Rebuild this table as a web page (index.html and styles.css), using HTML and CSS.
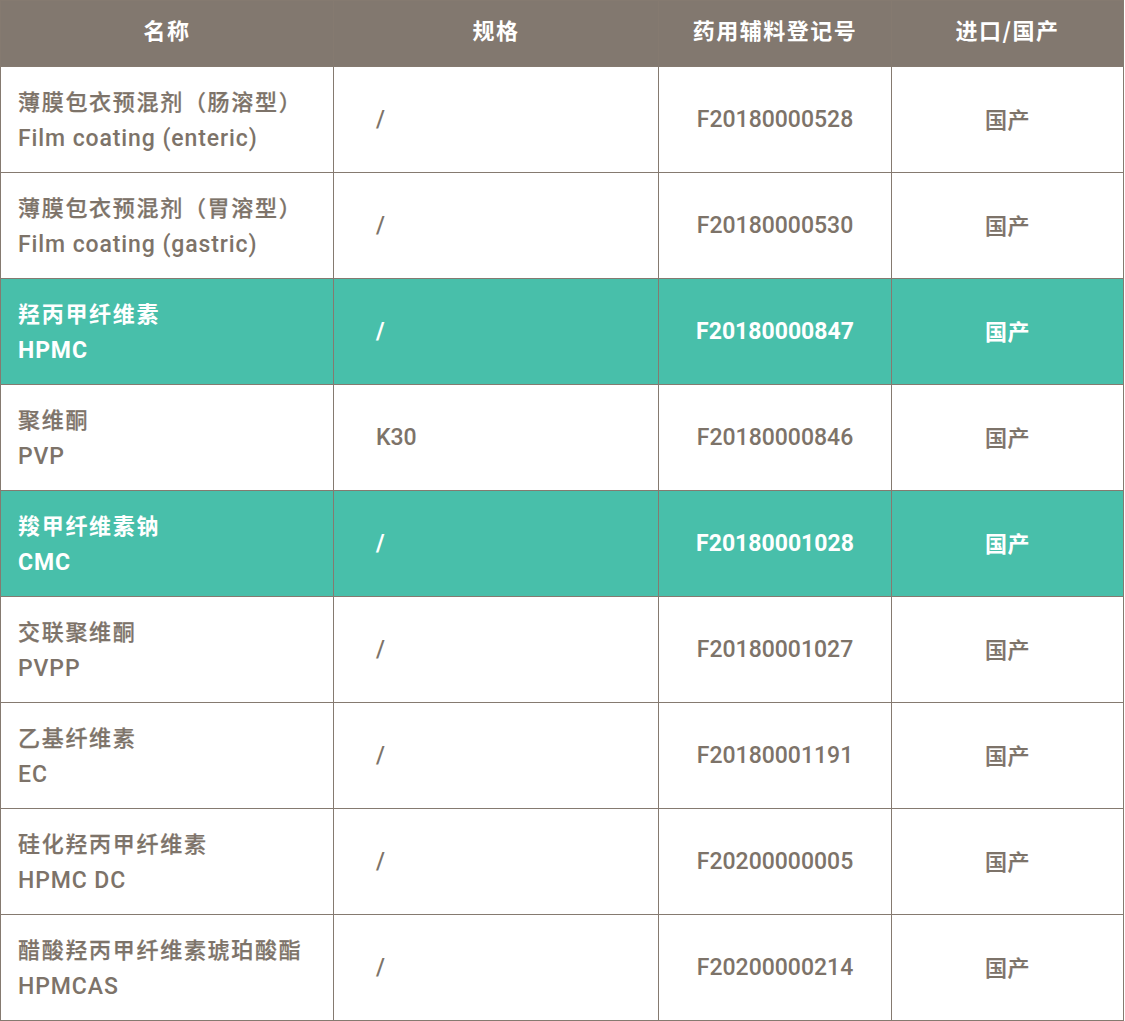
FILE: index.html
```html
<!DOCTYPE html>
<html lang="zh">
<head>
<meta charset="utf-8">
<link rel="stylesheet" href="styles.css">
</head>
<body>
<table class="spec">
  <colgroup>
    <col class="c1"><col class="c2"><col class="c3"><col class="c4">
  </colgroup>
  <thead>
    <tr><th>名称</th><th>规格</th><th>药用辅料登记号</th><th>进口/国产</th></tr>
  </thead>
  <tbody>
    <tr><td class="name"><span class="cn">薄膜包衣预混剂（肠溶型）</span><span class="en">Film coating (enteric)</span></td><td class="size">/</td><td class="num">F20180000528</td><td class="orig">国产</td></tr>
    <tr><td class="name"><span class="cn">薄膜包衣预混剂（胃溶型）</span><span class="en">Film coating (gastric)</span></td><td class="size">/</td><td class="num">F20180000530</td><td class="orig">国产</td></tr>
    <tr class="hl"><td class="name"><span class="cn">羟丙甲纤维素</span><span class="en">HPMC</span></td><td class="size">/</td><td class="num">F20180000847</td><td class="orig">国产</td></tr>
    <tr><td class="name"><span class="cn">聚维酮</span><span class="en">PVP</span></td><td class="size">K30</td><td class="num">F20180000846</td><td class="orig">国产</td></tr>
    <tr class="hl"><td class="name"><span class="cn">羧甲纤维素钠</span><span class="en">CMC</span></td><td class="size">/</td><td class="num">F20180001028</td><td class="orig">国产</td></tr>
    <tr><td class="name"><span class="cn">交联聚维酮</span><span class="en">PVPP</span></td><td class="size">/</td><td class="num">F20180001027</td><td class="orig">国产</td></tr>
    <tr><td class="name"><span class="cn">乙基纤维素</span><span class="en">EC</span></td><td class="size">/</td><td class="num">F20180001191</td><td class="orig">国产</td></tr>
    <tr><td class="name"><span class="cn">硅化羟丙甲纤维素</span><span class="en">HPMC DC</span></td><td class="size">/</td><td class="num">F20200000005</td><td class="orig">国产</td></tr>
    <tr><td class="name"><span class="cn">醋酸羟丙甲纤维素琥珀酸酯</span><span class="en">HPMCAS</span></td><td class="size">/</td><td class="num">F20200000214</td><td class="orig">国产</td></tr>
  </tbody>
</table>
</body>
</html>
```
FILE: styles.css
```css
html, body {
  margin: 0;
  padding: 0;
  background: #ffffff;
}
.spec {
  border-collapse: collapse;
  width: 1123px;
  table-layout: fixed;
  font-family: "Roboto", "Noto Sans CJK SC", sans-serif;
  color: #7d7369;
  font-size: 23px;
}
.c1 { width: 333px; }
.c2 { width: 325px; }
.c3 { width: 233px; }
.c4 { width: 232px; }
.spec th, .spec td {
  border: 1px solid #857a70;
  padding: 0;
}
.spec th {
  background: #82786f;
  color: #ffffff;
  font-family: "Noto Sans CJK SC", sans-serif;
  font-size: 22px;
  letter-spacing: 1.5px;
  font-weight: 700;
  height: 66px;
  padding-bottom: 9px;
  box-sizing: border-box;
  text-align: center;
}
.spec td {
  height: 105px;
  line-height: 36px;
  font-weight: 500;
}
.spec td.name {
  padding-left: 17px;
  text-align: left;
}
.name .cn {
  display: block;
  font-family: "Noto Sans CJK SC", sans-serif;
  font-size: 22px;
  letter-spacing: 1.7px;
  font-weight: 500;
  -webkit-text-stroke: 0.25px currentColor;
}
.name .en {
  display: block;
  margin-top: 3px;
  letter-spacing: 0.9px;
}
.spec td.size {
  padding-left: 42px;
  text-align: left;
}
.spec td.num {
  text-align: center;
}
.spec td.orig {
  text-align: center;
  font-family: "Noto Sans CJK SC", sans-serif;
  font-size: 22px;
  letter-spacing: 0.5px;
  font-weight: 500;
  height: 101px;
  padding-bottom: 4px;
  -webkit-text-stroke: 0.25px currentColor;
}
.spec tr.hl td {
  background: #48bfaa;
  color: #ffffff;
  font-weight: 700;
}
.spec tr.hl .cn {
  font-weight: 700;
  -webkit-text-stroke: 0;
}
.spec tr.hl td.orig {
  -webkit-text-stroke: 0;
}
```
